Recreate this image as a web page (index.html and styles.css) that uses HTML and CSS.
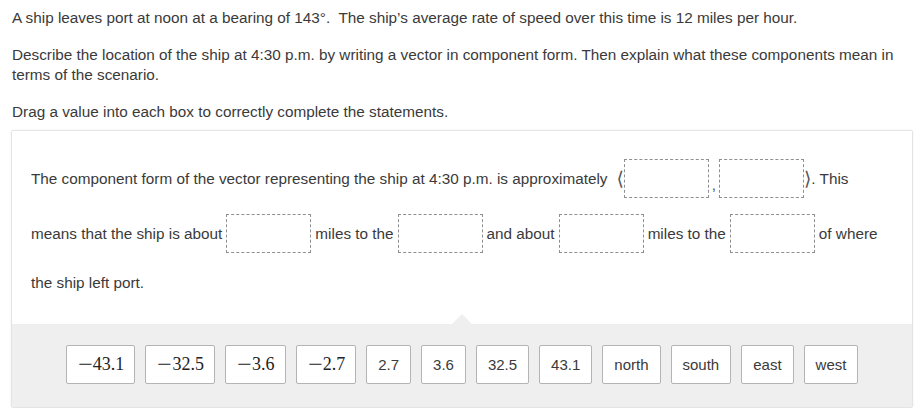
FILE: index.html
```html
<!DOCTYPE html>
<html>
<head>
<meta charset="utf-8">
<link rel="stylesheet" href="styles.css">
</head>
<body>
<div class="page">
  <p class="para">A ship leaves port at noon at a bearing of 143°.&nbsp; The ship’s average rate of speed over this time is 12 miles per hour.</p>
  <p class="para">Describe the location of the ship at 4:30 p.m. by writing a vector in component form. Then explain what these components mean in terms of the scenario.</p>
  <p class="para">Drag a value into each box to correctly complete the statements.</p>

  <div class="panel">
    <div class="statements">
      <div class="row">
        <span>The component form of the vector representing the ship at 4:30 p.m. is approximately</span>
        <span class="bracket bracket-open">⟨</span>
        <span class="drop"></span>
        <span class="comma">,</span>
        <span class="drop"></span>
        <span class="bracket">⟩</span>
        <span>. This</span>
      </div>
      <div class="row">
        <span>means that the ship is about</span>
        <span class="drop spaced"></span>
        <span>miles to the</span>
        <span class="drop spaced"></span>
        <span>and about</span>
        <span class="drop spaced"></span>
        <span>miles to the</span>
        <span class="drop spaced"></span>
        <span>of where</span>
      </div>
      <div class="row row-last">
        <span>the ship left port.</span>
      </div>
    </div>
    <div class="bank">
      <span class="tile math"><span class="minus">−</span>43.1</span>
      <span class="tile math"><span class="minus">−</span>32.5</span>
      <span class="tile math"><span class="minus">−</span>3.6</span>
      <span class="tile math"><span class="minus">−</span>2.7</span>
      <span class="tile">2.7</span>
      <span class="tile">3.6</span>
      <span class="tile">32.5</span>
      <span class="tile">43.1</span>
      <span class="tile">north</span>
      <span class="tile">south</span>
      <span class="tile">east</span>
      <span class="tile">west</span>
    </div>
  </div>
</div>
</body>
</html>
```

FILE: styles.css
```css
html, body {
  margin: 0;
  padding: 0;
  background: #ffffff;
}

.page {
  padding: 8px 11px 0 11px;
  font-family: "Liberation Sans", Arial, sans-serif;
  font-size: 15.3px;
  color: #3a3a3a;
}

.para {
  margin: 0 0 17px 1px;
  line-height: 20px;
}

.para:last-of-type {
  margin-bottom: 0;
}

.panel {
  margin-top: 8px;
  width: 900px;
  border: 1px solid #e4e4e4;
  box-shadow: 0 0 2px rgba(0, 0, 0, 0.08);
  border-radius: 2px;
}

.statements {
  padding: 20px 19px 19px 19px;
  background: #ffffff;
  position: relative;
}

.statements::after {
  content: "";
  position: absolute;
  left: 440px;
  bottom: 0;
  width: 0;
  height: 0;
  border-left: 10px solid transparent;
  border-right: 10px solid transparent;
  border-bottom: 10px solid #efefef;
}

.row {
  display: flex;
  align-items: center;
  height: 55px;
  white-space: nowrap;
}

.row-last {
  height: 44px;
}

.drop {
  display: inline-block;
  box-sizing: border-box;
  width: 85px;
  height: 39px;
  border: 1px dashed #8f8f8f;
}

.drop.spaced {
  margin: 0 4px;
}

.bracket {
  font-family: "DejaVu Sans", sans-serif;
  font-size: 19px;
  color: #555555;
  line-height: 1;
  margin-top: -1px;
}

.bracket-open {
  margin-left: 9px;
}

.comma {
  width: 10px;
  text-align: center;
  align-self: flex-end;
  margin-bottom: 12px;
  color: #555555;
}

.bank {
  background: #efefef;
  padding: 21px 0 23px 0;
  display: flex;
  justify-content: center;
  gap: 10px;
}

.tile {
  box-sizing: border-box;
  height: 39px;
  padding: 0 11px;
  display: flex;
  align-items: center;
  background: #ffffff;
  border: 1px solid #b4b4b4;
  border-radius: 2px;
  color: #3a3a3a;
  font-size: 15px;
}

.tile.math {
  font-family: "Liberation Serif", "Times New Roman", serif;
  font-size: 18px;
  padding: 0 10px 0 11px;
  color: #222222;
}

.minus {
  display: inline-block;
  transform: scaleX(1.45);
  transform-origin: left center;
  margin-right: 5px;
}
```
